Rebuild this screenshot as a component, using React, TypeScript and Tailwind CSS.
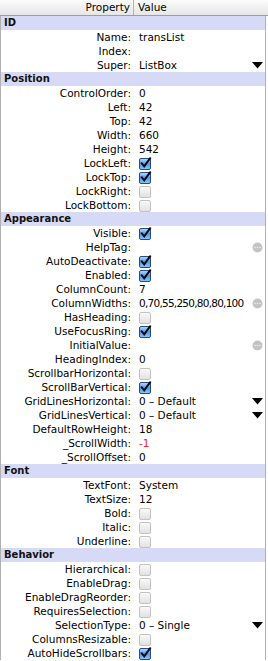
import React from 'react'

type Kind = 'text' | 'on' | 'off'

interface Prop {
  label: string
  value?: string
  kind?: Kind
  extra?: 'dots' | 'menu'
  red?: boolean
  tight?: boolean
}

interface Section {
  title: string
  rows: Prop[]
}

const sections: Section[] = [
  {
    title: 'ID',
    rows: [
      { label: 'Name', value: 'transList' },
      { label: 'Index', value: '' },
      { label: 'Super', value: 'ListBox', extra: 'menu' },
    ],
  },
  {
    title: 'Position',
    rows: [
      { label: 'ControlOrder', value: '0' },
      { label: 'Left', value: '42' },
      { label: 'Top', value: '42' },
      { label: 'Width', value: '660' },
      { label: 'Height', value: '542' },
      { label: 'LockLeft', kind: 'on' },
      { label: 'LockTop', kind: 'on' },
      { label: 'LockRight', kind: 'off' },
      { label: 'LockBottom', kind: 'off' },
    ],
  },
  {
    title: 'Appearance',
    rows: [
      { label: 'Visible', kind: 'on' },
      { label: 'HelpTag', value: '', extra: 'dots' },
      { label: 'AutoDeactivate', kind: 'on' },
      { label: 'Enabled', kind: 'on' },
      { label: 'ColumnCount', value: '7' },
      { label: 'ColumnWidths', value: '0,70,55,250,80,80,100', extra: 'dots', tight: true },
      { label: 'HasHeading', kind: 'off' },
      { label: 'UseFocusRing', kind: 'on' },
      { label: 'InitialValue', value: '', extra: 'dots' },
      { label: 'HeadingIndex', value: '0' },
      { label: 'ScrollbarHorizontal', kind: 'off' },
      { label: 'ScrollBarVertical', kind: 'on' },
      { label: 'GridLinesHorizontal', value: '0 – Default', extra: 'menu' },
      { label: 'GridLinesVertical', value: '0 – Default', extra: 'menu' },
      { label: 'DefaultRowHeight', value: '18' },
      { label: '_ScrollWidth', value: '-1', red: true },
      { label: '_ScrollOffset', value: '0' },
    ],
  },
  {
    title: 'Font',
    rows: [
      { label: 'TextFont', value: 'System' },
      { label: 'TextSize', value: '12' },
      { label: 'Bold', kind: 'off' },
      { label: 'Italic', kind: 'off' },
      { label: 'Underline', kind: 'off' },
    ],
  },
  {
    title: 'Behavior',
    rows: [
      { label: 'Hierarchical', kind: 'off' },
      { label: 'EnableDrag', kind: 'off' },
      { label: 'EnableDragReorder', kind: 'off' },
      { label: 'RequiresSelection', kind: 'off' },
      { label: 'SelectionType', value: '0 – Single', extra: 'menu' },
      { label: 'ColumnsResizable', kind: 'off' },
      { label: 'AutoHideScrollbars', kind: 'on' },
    ],
  },
]

function CheckBox({ on }: { on: boolean }) {
  if (on) {
    return (
      <svg width="13" height="13" viewBox="0 0 13 13" className="block">
        <defs>
          <linearGradient id="cbOn" x1="0" y1="0" x2="0" y2="1">
            <stop offset="0" stopColor="#b7dcfd" />
            <stop offset="0.5" stopColor="#4f9bec" />
            <stop offset="1" stopColor="#8fc8fa" />
          </linearGradient>
        </defs>
        <rect x="0.5" y="1.5" width="11" height="11" rx="1.5" fill="url(#cbOn)" stroke="#2b4a7e" />
        <path d="M2.6 6.2 L5.2 9.4 L11.2 1.2" stroke="#05080f" strokeWidth="2" fill="none" strokeLinecap="round" />
      </svg>
    )
  }
  return (
    <svg width="13" height="13" viewBox="0 0 13 13" className="block">
      <defs>
        <linearGradient id="cbOff" x1="0" y1="0" x2="0" y2="1">
          <stop offset="0" stopColor="#fafafa" />
          <stop offset="1" stopColor="#e0e0e0" />
        </linearGradient>
      </defs>
      <rect x="0.5" y="1.5" width="11" height="11" rx="1.5" fill="url(#cbOff)" stroke="#c2c2c2" />
    </svg>
  )
}

function Dots() {
  return (
    <svg width="11" height="11" viewBox="0 0 11 11" className="block">
      <circle cx="5.5" cy="5.5" r="5" fill="#c3c3c3" />
      <circle cx="3" cy="5.5" r="0.8" fill="#ececec" />
      <circle cx="5.5" cy="5.5" r="0.8" fill="#ececec" />
      <circle cx="8" cy="5.5" r="0.8" fill="#ececec" />
    </svg>
  )
}

function Menu() {
  return (
    <svg width="11" height="7" viewBox="0 0 11 7" className="block">
      <polygon points="0,0 11,0 5.5,6.5" fill="#000" />
    </svg>
  )
}

function Row({ p }: { p: Prop }) {
  return (
    <div className="flex h-[14px] leading-[14px]">
      <div className="w-[134px] shrink-0 pr-[4px] text-right whitespace-nowrap">{p.label}:</div>
      <div className="relative flex flex-1 items-center pl-[4px] whitespace-nowrap">
        {p.kind === 'on' && <CheckBox on />}
        {p.kind === 'off' && <CheckBox on={false} />}
        {(!p.kind || p.kind === 'text') && (
          <span className={`${p.red ? 'text-[#e8262c]' : ''} ${p.tight ? 'tracking-[-0.75px]' : ''}`}>{p.value}</span>
        )}
        {p.extra && (
          <div className="absolute right-[2px] top-0 flex h-[14px] items-center">
            {p.extra === 'dots' ? <Dots /> : <Menu />}
          </div>
        )}
      </div>
    </div>
  )
}

export default function App() {
  return (
    <div
      className="h-[661px] w-[268px] overflow-hidden bg-white text-[10.5px] text-black"
      style={{ fontFamily: '"DejaVu Sans", Verdana, sans-serif' }}
    >
      {/* column header */}
      <div className="flex h-[16px] border-b border-[#9e9e9e] bg-gradient-to-b from-[#fbfbfb] to-[#e6e6e6] leading-[15px]">
        <div className="w-[134px] shrink-0 border-r border-[#b4b4b4] pr-[3px] text-right">Property</div>
        <div className="flex-1 pl-[4px]">Value</div>
      </div>

      <div className="mr-[2px] border-l border-r border-[#b0b0b0]">
        {sections.map((s) => (
          <div key={s.title}>
            <div className="h-[14px] bg-[#d6daf6] pl-[3px] text-[10px] font-bold leading-[14px] text-[#111]">
              {s.title}
            </div>
            {s.rows.map((r) => (
              <Row key={r.label} p={r} />
            ))}
          </div>
        ))}
      </div>
    </div>
  )
}
